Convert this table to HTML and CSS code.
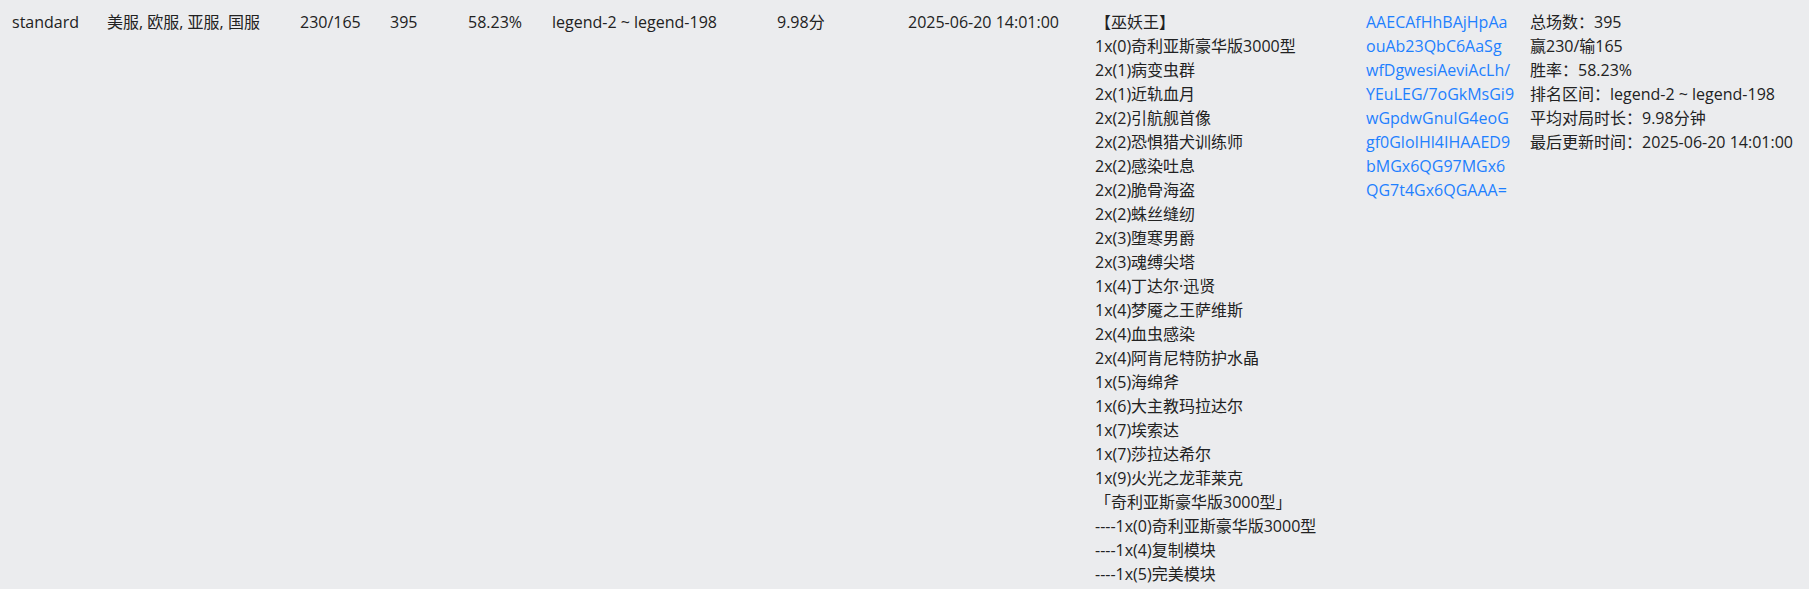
FILE: index.html
```html
<!DOCTYPE html>
<html lang="zh-CN">
<head>
  <meta charset="UTF-8">
  <title>卡组统计</title>
  <link rel="stylesheet" href="styles.css">
</head>
<body>
  <div class="deck-row">
    <div class="cell">standard</div>
    <div class="cell">美服, 欧服, 亚服, 国服</div>
    <div class="cell">230/165</div>
    <div class="cell">395</div>
    <div class="cell">58.23%</div>
    <div class="cell">legend-2 ~ legend-198</div>
    <div class="cell">9.98分</div>
    <div class="cell">2025-06-20 14:01:00</div>
    <div class="cell deck-list">
      <div>【巫妖王】</div>
      <div>1x(0)奇利亚斯豪华版3000型</div>
      <div>2x(1)病变虫群</div>
      <div>2x(1)近轨血月</div>
      <div>2x(2)引航舰首像</div>
      <div>2x(2)恐惧猎犬训练师</div>
      <div>2x(2)感染吐息</div>
      <div>2x(2)脆骨海盗</div>
      <div>2x(2)蛛丝缝纫</div>
      <div>2x(3)堕寒男爵</div>
      <div>2x(3)魂缚尖塔</div>
      <div>1x(4)丁达尔·迅贤</div>
      <div>1x(4)梦魇之王萨维斯</div>
      <div>2x(4)血虫感染</div>
      <div>2x(4)阿肯尼特防护水晶</div>
      <div>1x(5)海绵斧</div>
      <div>1x(6)大主教玛拉达尔</div>
      <div>1x(7)埃索达</div>
      <div>1x(7)莎拉达希尔</div>
      <div>1x(9)火光之龙菲莱克</div>
      <div>「奇利亚斯豪华版3000型」</div>
      <div>----1x(0)奇利亚斯豪华版3000型</div>
      <div>----1x(4)复制模块</div>
      <div>----1x(5)完美模块</div>
    </div>
    <div class="cell deck-code">
      <a href="#">AAECAfHhBAjHpAa<br>ouAb23QbC6AaSg<br>wfDgwesiAeviAcLh/<br>YEuLEG/7oGkMsGi9<br>wGpdwGnuIG4eoG<br>gf0GloIHl4IHAAED9<br>bMGx6QG97MGx6<br>QG7t4Gx6QGAAA=</a>
    </div>
    <div class="cell deck-stats">
      <div>总场数：395</div>
      <div>赢230/输165</div>
      <div>胜率：58.23%</div>
      <div>排名区间：legend-2 ~ legend-198</div>
      <div>平均对局时长：9.98分钟</div>
      <div>最后更新时间：2025-06-20 14:01:00</div>
    </div>
  </div>
</body>
</html>
```

FILE: styles.css
```css
html, body {
  margin: 0;
  background: #ebecee;
}
body {
  font-family: "Open Sans", "Noto Sans CJK SC", sans-serif;
  font-size: 16px;
  line-height: 24px;
  color: #222;
}
.deck-row {
  display: grid;
  grid-template-columns: 95px 193px 90px 78px 84px 225px 131px 187px 271px 164px auto;
  padding: 10px 0 0 12px;
}
.cell {
  white-space: nowrap;
}
.deck-code a {
  color: #1e80ff;
  text-decoration: none;
}
```
